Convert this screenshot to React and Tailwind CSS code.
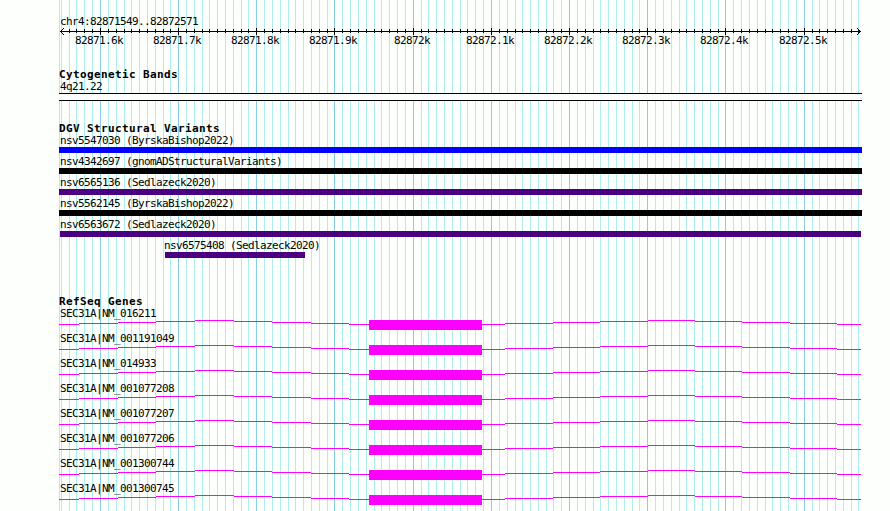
const LEFT = 59;
const WIDTH = 803;

const MINOR = [
  59, 61, 69, 76, 84, 92, 108, 116, 124, 131, 139, 147, 155, 163, 170, 186, 194, 202, 209, 217, 225, 233, 241, 248,
  264, 272, 280, 288, 295, 303, 311, 319, 327, 342, 350, 358, 366, 374, 381, 389, 397, 405, 421, 428, 436, 444, 452,
  460, 467, 475, 483, 499, 507, 515, 522, 530, 538, 546, 553, 561, 577, 585, 593, 600, 608, 616, 624, 632, 639, 655,
  663, 671, 679, 686, 694, 702, 710, 718, 733, 741, 749, 757, 765, 772, 780, 788, 796, 812, 819, 827, 835, 843, 851,
  858,
];

const MAJOR = [
  [100, "82871.6k"],
  [178, "82871.7k"],
  [256, "82871.8k"],
  [334, "82871.9k"],
  [413, "82872k"],
  [491, "82872.1k"],
  [569, "82872.2k"],
  [647, "82872.3k"],
  [725, "82872.4k"],
  [804, "82872.5k"],
];

const VARIANTS = [
  { name: "nsv5547030 (ByrskaBishop2022)", start: 59, end: 862, color: "bg-[#0000ff]" },
  { name: "nsv4342697 (gnomADStructuralVariants)", start: 59, end: 862, color: "bg-black" },
  { name: "nsv6565136 (Sedlazeck2020)", start: 59, end: 862, color: "bg-[#4b0082]" },
  { name: "nsv5562145 (ByrskaBishop2022)", start: 59, end: 862, color: "bg-black" },
  { name: "nsv6563672 (Sedlazeck2020)", start: 60, end: 861, color: "bg-[#4b0082]" },
  { name: "nsv6575408 (Sedlazeck2020)", start: 165, end: 305, color: "bg-[#4b0082]", labelStart: 163 },
];

const GENES = [
  "NM_016211",
  "NM_001191049",
  "NM_014933",
  "NM_001077208",
  "NM_001077207",
  "NM_001077206",
  "NM_001300744",
  "NM_001300745",
];

// Intron steps: [start, end, row]
const STEPS = [
  [59, 79, 4], [79, 118, 3], [118, 156, 2], [156, 195, 1], [195, 234, 0], [234, 272, 1], [272, 311, 2],
  [311, 349, 3], [349, 369, 4], [482, 505, 4], [505, 553, 3], [553, 600, 2], [600, 648, 1], [648, 695, 0],
  [695, 742, 1], [742, 790, 2], [790, 837, 3], [837, 861, 4],
];

const LABEL =
  "h-3 whitespace-pre pl-px text-[11px] leading-[14px] tracking-[-0.622px] font-['DejaVu_Sans_Mono',monospace]";
const TITLE =
  "h-3 whitespace-pre text-[11px] font-bold leading-[14px] tracking-[0.378px] font-['DejaVu_Sans_Mono',monospace]";

function Grid() {
  return (
    <svg className="absolute inset-0" width="890" height="511" shapeRendering="crispEdges">
      {MINOR.map((x) => (
        <rect key={x} x={x} y="0" width="1" height="511" fill="#afeeee" />
      ))}
      {MAJOR.map(([x]) => (
        <rect key={x} x={x} y="0" width="1" height="511" fill="#87ceeb" />
      ))}
    </svg>
  );
}

function Ruler() {
  return (
    <svg className="block overflow-visible" width={WIDTH} height="21" viewBox={`${LEFT} 27 ${WIDTH} 21`}>
      <g shapeRendering="crispEdges">
        <rect x="60" y="31" width="801" height="1" />
        {MINOR.slice(2).map((x) => (
          <rect key={x} x={x} y="29" width="1" height="4" />
        ))}
        {MAJOR.map(([x]) => (
          <rect key={x} x={x} y="28" width="1" height="7" />
        ))}
        {[1, 2, 3].map((d) => (
          <g key={d}>
            <rect x={60 + d} y={31 - d} width="1" height="1" />
            <rect x={60 + d} y={31 + d} width="1" height="1" />
            <rect x={860 - d} y={31 - d} width="1" height="1" />
            <rect x={860 - d} y={31 + d} width="1" height="1" />
          </g>
        ))}
      </g>
      {MAJOR.map(([x, text]) => (
        <text
          key={x}
          x={x - 1 - text.length * 3}
          y="44"
          className="text-[11px] tracking-[-0.622px] font-['DejaVu_Sans_Mono',monospace]"
        >
          {text}
        </text>
      ))}
    </svg>
  );
}

function Variant({ name, start, end, color, labelStart = LEFT }) {
  return (
    <div className="flex h-[21px] flex-col">
      <div className={LABEL} style={{ marginLeft: labelStart - LEFT }}>
        {name}
      </div>
      <div className={`mt-px h-1.5 ${color}`} style={{ marginLeft: start - LEFT, width: end - start }} />
    </div>
  );
}

function Gene({ name }) {
  return (
    <div className="flex h-[25px] flex-col">
      <div className={LABEL}>SEC31A|{name}</div>
      <svg
        className="mt-px block"
        width={WIDTH}
        height="10"
        viewBox={`${LEFT} 0 ${WIDTH} 10`}
        fill="#ff00ff"
        shapeRendering="crispEdges"
      >
        {STEPS.map(([start, end, y]) => (
          <rect key={start} x={start} y={y} width={end - start} height="1" />
        ))}
        <rect x="369" y="0" width="113" height="10" />
      </svg>
    </div>
  );
}

export default function App() {
  return (
    <main className="relative h-[511px] w-[890px] overflow-hidden bg-[#fcfffc] text-black">
      <Grid />
      <div className="relative ml-[59px] flex w-[803px] flex-col pt-[15px]">
        <div className={LABEL}>chr4:82871549..82872571</div>
        <Ruler />
        <section className="mt-5">
          <h2 className={TITLE}>Cytogenetic Bands</h2>
          <div className={LABEL}>4q21.22</div>
          <div className="mt-px h-2 border-y border-black bg-[#fcfffc]" />
        </section>
        <section className="mt-[21px]">
          <h2 className={TITLE}>DGV Structural Variants</h2>
          {VARIANTS.map((v) => (
            <Variant key={v.name} {...v} />
          ))}
        </section>
        <section className="mt-[35px]">
          <h2 className={TITLE}>RefSeq Genes</h2>
          {GENES.map((g) => (
            <Gene key={g} name={g} />
          ))}
        </section>
      </div>
    </main>
  );
}
